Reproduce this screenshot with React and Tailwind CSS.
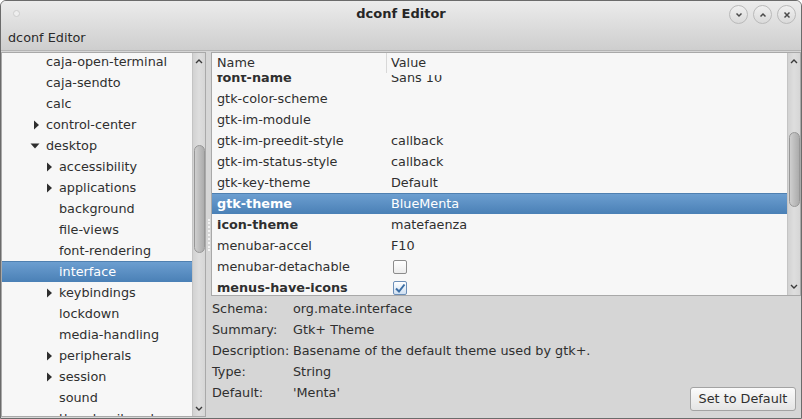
import React from "react";

const treeItems = [
  { name: "caja-open-terminal", depth: 1 },
  { name: "caja-sendto", depth: 1 },
  { name: "calc", depth: 1 },
  { name: "control-center", depth: 1, arrow: "closed" },
  { name: "desktop", depth: 1, arrow: "open" },
  { name: "accessibility", depth: 2, arrow: "closed" },
  { name: "applications", depth: 2, arrow: "closed" },
  { name: "background", depth: 2 },
  { name: "file-views", depth: 2 },
  { name: "font-rendering", depth: 2 },
  { name: "interface", depth: 2, selected: true },
  { name: "keybindings", depth: 2, arrow: "closed" },
  { name: "lockdown", depth: 2 },
  { name: "media-handling", depth: 2 },
  { name: "peripherals", depth: 2, arrow: "closed" },
  { name: "session", depth: 2, arrow: "closed" },
  { name: "sound", depth: 2 },
  { name: "thumbnail-cache", depth: 2 },
];

const keys = [
  { name: "font-name", value: "Sans 10", bold: true },
  { name: "gtk-color-scheme", value: "" },
  { name: "gtk-im-module", value: "" },
  { name: "gtk-im-preedit-style", value: "callback" },
  { name: "gtk-im-status-style", value: "callback" },
  { name: "gtk-key-theme", value: "Default" },
  { name: "gtk-theme", value: "BlueMenta", bold: true, selected: true },
  { name: "icon-theme", value: "matefaenza", bold: true },
  { name: "menubar-accel", value: "F10" },
  { name: "menubar-detachable", check: false },
  { name: "menus-have-icons", check: true, bold: true },
];

const info = [
  ["Schema:", "org.mate.interface"],
  ["Summary:", "Gtk+ Theme"],
  ["Description:", "Basename of the default theme used by gtk+."],
  ["Type:", "String"],
  ["Default:", "'Menta'"],
];

function Arrow({ kind }) {
  if (!kind) return null;
  return (
    <svg width="10" height="10" viewBox="0 0 10 10" className="-ml-[3px]">
      {kind === "closed" ? (
        <polygon points="4,0.5 9,5 4,9.5" fill="#2e2e2e" />
      ) : (
        <polygon points="0.5,2.5 9.5,2.5 5,7.5" fill="#2e2e2e" />
      )}
    </svg>
  );
}

function Chevron({ up }) {
  return (
    <svg width="8" height="5" viewBox="0 0 8 5">
      <path d={up ? "M1 4 L4 1 L7 4" : "M1 1 L4 4 L7 1"} fill="none" stroke="#3a3a3a" strokeWidth="1.4" />
    </svg>
  );
}

function Scrollbar({ thumbTop, thumbHeight, downHeight }) {
  return (
    <div className="w-[13px] flex flex-col items-center bg-gradient-to-r from-[#d2d2d2] via-[#dedede] to-[#d6d6d6] border-l border-[#c4c4c4]">
      <div className="h-[16px] flex items-center justify-center">
        <Chevron up />
      </div>
      <div
        className="w-[11px] rounded-[6px] border border-[#979797] bg-gradient-to-r from-[#cfcfcf] via-[#bdbdbd] to-[#acacac]"
        style={{ marginTop: thumbTop, height: thumbHeight }}
      />
      <div className="flex-1" />
      <div className="flex items-center justify-center" style={{ height: downHeight }}>
        <Chevron />
      </div>
    </div>
  );
}

function Checkbox({ checked }) {
  return (
    <div
      className={
        "ml-[2px] w-[14px] h-[14px] rounded-[2px] border flex items-center justify-center " +
        (checked
          ? "border-[#6c8fb8] bg-gradient-to-b from-[#ffffff] to-[#cfe0f2]"
          : "border-[#8c8c8c] bg-gradient-to-b from-[#ffffff] to-[#ececec]")
      }
    >
      {checked && (
        <svg width="12" height="12" viewBox="0 0 12 12">
          <path d="M2 6.5 L5 9.5 L10.5 2.5" fill="none" stroke="#3b6ea5" strokeWidth="2" />
        </svg>
      )}
    </div>
  );
}

function TitleButton({ children }) {
  return (
    <div className="w-[19px] h-[19px] rounded-full border border-[#b9b9b9] bg-gradient-to-b from-[#f0f0f0] to-[#dadada] flex items-center justify-center">
      {children}
    </div>
  );
}

export default function App() {
  return (
    <div
      className="w-[802px] h-[419px] border border-[#6b6b6b] rounded-t-[6px] bg-[#d6d6d6] flex flex-col overflow-hidden text-[12.8px] text-[#2f2f2f]"
      style={{ fontFamily: "'DejaVu Sans', 'Liberation Sans', sans-serif" }}
    >
      {/* title bar + menu bar */}
      <div className="h-[50px] flex flex-col bg-gradient-to-b from-[#ececec] to-[#cecece] border-b border-[#b4b4b4]">
        <div className="h-[25px] grid grid-cols-[1fr_auto_1fr] items-center">
          <div className="pl-[12px]">
            <div className="w-[7px] h-[7px] rounded-full bg-[#eeeeee] border border-[#cdcdcd]" />
          </div>
          <div className="font-bold text-[13px] text-[#262626] pt-[1px]">dconf Editor</div>
          <div className="flex justify-end gap-[5px] pr-[5px] pt-[2px]">
            <TitleButton>
              <svg width="8" height="6" viewBox="0 0 8 6">
                <path d="M1.5 1.5 L4 4 L6.5 1.5" fill="none" stroke="#4a4a4a" strokeWidth="1.5" />
              </svg>
            </TitleButton>
            <TitleButton>
              <svg width="8" height="6" viewBox="0 0 8 6">
                <path d="M1.5 4.5 L4 2 L6.5 4.5" fill="none" stroke="#4a4a4a" strokeWidth="1.5" />
              </svg>
            </TitleButton>
            <TitleButton>
              <svg width="8" height="8" viewBox="0 0 8 8">
                <path d="M1.5 1.5 L6.5 6.5 M6.5 1.5 L1.5 6.5" fill="none" stroke="#4a4a4a" strokeWidth="1.5" />
              </svg>
            </TitleButton>
          </div>
        </div>
        <div className="flex-1 flex items-center pl-[7px] text-[#2a2a2a]">dconf Editor</div>
      </div>

      {/* body */}
      <div className="flex-1 flex pt-[1px] pb-[1px] min-h-0">
        {/* left tree */}
        <div className="w-[205px] border border-[#a9a9a9] flex bg-[#f7f7f7] min-h-0">
          <div className="flex-1 overflow-hidden">
            <div className="-mt-[2px]">
              {treeItems.map((it) => (
                <div
                  key={it.name}
                  className={
                    "h-[21px] flex items-center whitespace-nowrap " +
                    (it.selected
                      ? "bg-gradient-to-b from-[#6c9ed0] to-[#4a80b6] text-white border-t border-[#4f80b0]"
                      : "")
                  }
                >
                  <div className={it.depth === 1 ? "w-[31px]" : "w-[44px]"} />
                  <div className="w-[13px] flex items-center">
                    <Arrow kind={it.arrow} />
                  </div>
                  <span>{it.name}</span>
                </div>
              ))}
            </div>
          </div>
          <Scrollbar thumbTop={76} thumbHeight={108} downHeight={16} />
        </div>

        {/* pane handle */}
        <div className="w-[5px] flex flex-col items-center justify-center">
          <div className="h-[32px] w-[2px] border-l-2 border-dotted border-[#f4f4f4]" />
        </div>

        {/* right column */}
        <div className="flex-1 flex flex-col min-w-0">
          <div className="h-[244px] border border-[#a9a9a9] flex bg-[#f7f7f7]">
            <div className="flex-1 flex flex-col overflow-hidden">
              <div className="h-[22px] pb-[2px] flex items-center shrink-0 relative z-10 bg-[#f7f7f7]">
                <div className="w-[175px] pl-[5px] border-r border-[#d8d8d8] h-full flex items-center">Name</div>
                <div className="pl-[4px]">Value</div>
              </div>
              <div className="-mt-[8px]">
                {keys.map((k) => (
                  <div
                    key={k.name}
                    className={
                      "h-[21px] flex items-center whitespace-nowrap " +
                      (k.selected
                        ? "bg-gradient-to-b from-[#6c9ed0] to-[#4a80b6] text-white border-t border-[#4f80b0]"
                        : "")
                    }
                  >
                    <div className={"w-[175px] pl-[5px] " + (k.bold ? "font-bold" : "")}>{k.name}</div>
                    <div className="pl-[4px] flex items-center">
                      {"check" in k ? <Checkbox checked={k.check} /> : k.value}
                    </div>
                  </div>
                ))}
              </div>
            </div>
            <Scrollbar thumbTop={63} thumbHeight={75} downHeight={18} />
          </div>

          {/* info panel */}
          <div className="flex-1 flex justify-between">
            <div className="pt-[2px] pl-[1px]">
              {info.map(([label, value]) => (
                <div key={label} className="h-[21px] flex items-center whitespace-nowrap">
                  <div className="w-[81px]">{label}</div>
                  <div>{value}</div>
                </div>
              ))}
            </div>
            <button className="self-end mb-[6px] mr-[5px] w-[106px] h-[24px] rounded-[3px] border border-[#a3a3a3] bg-gradient-to-b from-[#fbfbfb] to-[#e4e4e4] text-[#2f2f2f] flex items-center justify-center">
              Set to Default
            </button>
          </div>
        </div>
      </div>
    </div>
  );
}
